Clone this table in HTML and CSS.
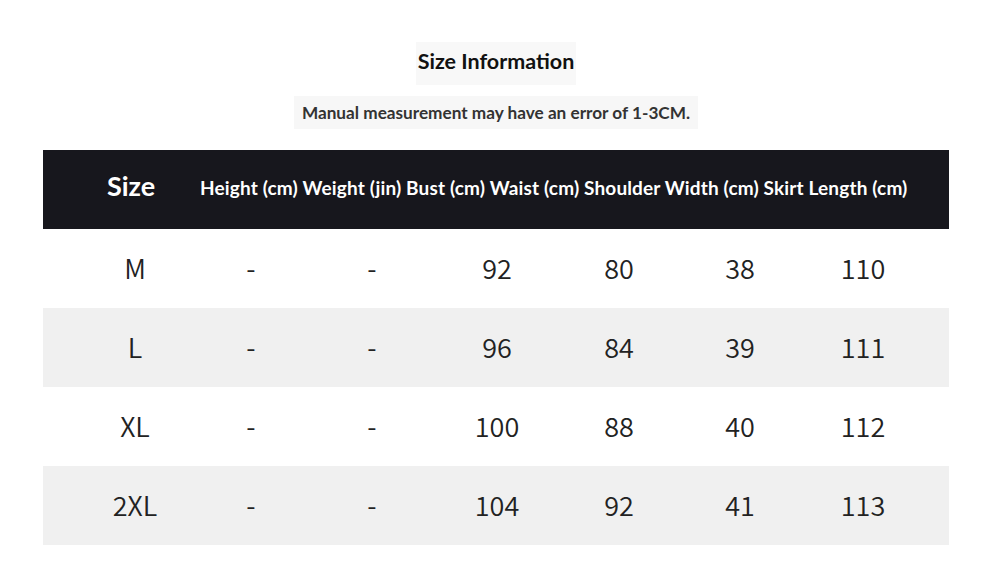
FILE: index.html
```html
<!DOCTYPE html>
<html>
<head>
<meta charset="utf-8">
<link rel="stylesheet" href="styles.css">
</head>
<body>
<div class="page">
  <div class="titles">
    <h1 class="title">Size Information</h1>
    <p class="note">Manual measurement may have an error of 1-3CM.</p>
  </div>
  <div class="table">
    <div class="head">
      <div class="head-size">Size</div>
      <div class="head-cols">Height (cm) Weight (jin) Bust (cm) Waist (cm) Shoulder Width (cm) Skirt Length (cm)</div>
    </div>
    <div class="row">
      <span>M</span><span>-</span><span>-</span><span>92</span><span>80</span><span>38</span><span>110</span>
    </div>
    <div class="row alt">
      <span>L</span><span>-</span><span>-</span><span>96</span><span>84</span><span>39</span><span>111</span>
    </div>
    <div class="row">
      <span>XL</span><span>-</span><span>-</span><span>100</span><span>88</span><span>40</span><span>112</span>
    </div>
    <div class="row alt">
      <span>2XL</span><span>-</span><span>-</span><span>104</span><span>92</span><span>41</span><span>113</span>
    </div>
  </div>
</div>
</body>
</html>
```
FILE: styles.css
```css
* { box-sizing: border-box; }
body {
  margin: 0;
  background: #fff;
  font-family: Lato, "Noto Sans", sans-serif;
  width: 990px;
  height: 587px;
  overflow: hidden;
}
.page {
  padding: 42px 41px 0 43px;
}
.titles {
  display: flex;
  flex-direction: column;
  align-items: center;
}
.title {
  margin: 0;
  background: #f8f8f8;
  font-size: 21.5px;
  font-weight: 700;
  color: #111;
  padding: 6px 0 0;
  height: 43px;
  width: 160px;
  text-align: center;
}
.note {
  margin: 11px 0 0;
  background: #f7f7f7;
  font-size: 17.2px;
  font-weight: 700;
  color: #333;
  height: 33px;
  line-height: 33px;
  width: 404px;
  text-align: center;
}
.table {
  margin-top: 21px;
  width: 906px;
}
.head {
  height: 79px;
  background: #17171d;
  color: #fff;
  display: flex;
  align-items: center;
  font-weight: 700;
}
.head-size {
  font-size: 27px;
  padding-left: 64px;
  width: 157px;
  padding-bottom: 8px;
}
.head-cols {
  font-size: 19px;
  letter-spacing: 0.15px;
  padding-bottom: 4px;
}
.row {
  height: 79px;
  display: grid;
  grid-template-columns: 120px 112px 130px 120px 124px 118px 128px;
  align-items: center;
  padding: 0 22px 2px 32px;
  font-family: "Noto Sans CJK SC", "Noto Sans", sans-serif;
  font-weight: 350;
  font-size: 27px;
  color: #222;
}
.row span {
  text-align: center;
}
.alt {
  background: #f0f0f0;
}
```
